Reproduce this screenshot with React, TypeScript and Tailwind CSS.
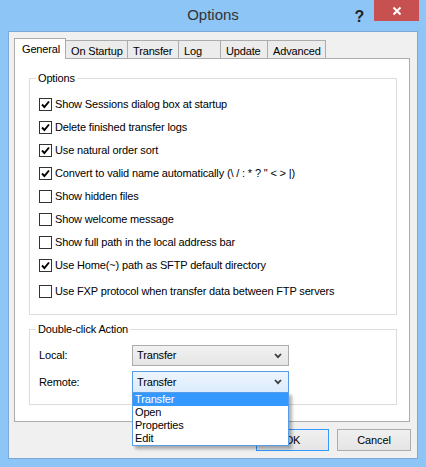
import { useState } from 'react'

const options = [
  { label: 'Show Sessions dialog box at startup', checked: true },
  { label: 'Delete finished transfer logs', checked: true },
  { label: 'Use natural order sort', checked: true },
  { label: 'Convert to valid name automatically (\\ / : * ? " < > |)', checked: true },
  { label: 'Show hidden files', checked: false },
  { label: 'Show welcome message', checked: false },
  { label: 'Show full path in the local address bar', checked: false },
  { label: 'Use Home(~) path as SFTP default directory', checked: true },
  { label: 'Use FXP protocol when transfer data between FTP servers', checked: false },
]

const tabs = [
  { name: 'General', w: 'w-[52px]' },
  { name: 'On Startup', w: 'w-[62px]' },
  { name: 'Transfer', w: 'w-[51px]' },
  { name: 'Log', w: 'w-[42px]' },
  { name: 'Update', w: 'w-[47px]' },
  { name: 'Advanced', w: 'w-[58px]' },
]

function Checkbox({ checked }: { checked: boolean }) {
  return (
    <div className="w-[13px] h-[13px] border border-[#333333] bg-white flex items-center justify-center shrink-0">
      {checked && (
        <svg width="9" height="9" viewBox="0 0 9 9">
          <path d="M1 4.5 L3.4 7 L8 1.5" fill="none" stroke="#000" strokeWidth="1.9" />
        </svg>
      )}
    </div>
  )
}

function Chevron() {
  return (
    <svg width="8" height="6" viewBox="0 0 8 6" className="shrink-0">
      <path d="M1 1 L4 4.2 L7 1" fill="none" stroke="#3c3c3c" strokeWidth="1.8" />
    </svg>
  )
}

export default function App() {
  const [checks, setChecks] = useState(options.map(o => o.checked))

  return (
    <div className="w-[426px] h-[467px] bg-[#8cc5f6] flex flex-col text-[11px] tracking-[-0.15px] text-black" style={{ fontFamily: '"Liberation Sans", Arial, sans-serif' }}>
      {/* title bar */}
      <div className="h-[31px] grid grid-cols-[1fr_auto_1fr]">
        <div />
        <div className="text-[15px] tracking-normal text-[#333] pt-[4px]">Options</div>
        <div className="flex justify-end items-start pr-[7px]">
          <div className="text-[16px] font-bold text-[#222] pt-[5px] mr-[10px]">?</div>
          <div className="w-[45px] h-[21px] bg-[#c75050] flex items-center justify-center">
            <svg width="10" height="10" viewBox="0 0 10 10">
              <path d="M1.5 1.5 L8.5 8.5 M8.5 1.5 L1.5 8.5" stroke="#fff" strokeWidth="2" />
            </svg>
          </div>
        </div>
      </div>

      {/* client */}
      <div className="mx-[8px] h-[428px] bg-[#f0f0f0] border border-[#7aa9d8] pl-[5px] pr-[6px] pt-[6px] flex flex-col">
        <div className="flex items-end h-[20px]">
          {tabs.map((t, i) =>
            i === 0 ? (
              <div key={t.name} className={`${t.w} h-[21px] -mb-px relative z-10 bg-white border border-b-0 border-[#acacac] pl-[7px] pt-[2px]`}>
                {t.name}
              </div>
            ) : (
              <div key={t.name} className={`${t.w} h-[18px] bg-[#ececec] border border-b-0 border-l-0 border-[#acacac] pl-[5px] pt-[2px]`}>
                {t.name}
              </div>
            )
          )}
        </div>

        <div className="w-[396px] h-[364px] bg-white border border-[#acacac] pl-[14px] pt-[12px]">
          <fieldset className="w-[368px] h-[244px] border border-[#dcdcdc]">
            <legend className="ml-[6px] px-[2px] leading-[14px]">Options</legend>
            <div className="pt-[8px] pl-[9px] flex flex-col">
              {options.map((o, i) => (
                <label key={o.label} className={`h-[23px] flex items-center gap-[3px] ${i === 8 ? 'mt-[3px]' : ''}`} onClick={() => setChecks(c => c.map((v, j) => (j === i ? !v : v)))}>
                  <Checkbox checked={checks[i]} />
                  <span>{o.label}</span>
                </label>
              ))}
            </div>
          </fieldset>

          <fieldset className="mt-[7px] w-[368px] h-[83px] border border-[#dcdcdc]">
            <legend className="ml-[6px] px-[2px] leading-[14px]">Double-click Action</legend>
            <div className="pt-[9px] pl-[9px] flex flex-col gap-[5px]">
              <div className="flex items-center h-[21px]">
                <div className="w-[93px]">Local:</div>
                <div className="w-[157px] h-[21px] border border-[#acacac] bg-gradient-to-b from-[#f2f2f2] to-[#e5e5e5] flex items-center justify-between pl-[4px] pr-[6px]">
                  <span>Transfer</span>
                  <Chevron />
                </div>
              </div>
              <div className="flex items-center h-[22px]">
                <div className="w-[93px]">Remote:</div>
                <div className="relative w-[157px] h-[22px] border border-[#569de5] bg-gradient-to-b from-[#ecf4fc] to-[#dcecfc] flex items-center justify-between pl-[4px] pr-[6px]">
                  <span>Transfer</span>
                  <Chevron />
                  <div className="absolute left-[-1px] top-[20px] w-[157px] h-[54px] bg-white border border-[#569de5] shadow-[3px_3px_3px_rgba(0,0,0,0.3)] z-20 flex flex-col">
                    <div className="h-[13px] leading-[13px] bg-[#3399ff] text-white pl-[2px]">Transfer</div>
                    <div className="h-[13px] leading-[13px] pl-[2px]">Open</div>
                    <div className="h-[13px] leading-[13px] pl-[2px]">Properties</div>
                    <div className="h-[13px] leading-[13px] pl-[2px]">Edit</div>
                  </div>
                </div>
              </div>
            </div>
          </fieldset>
        </div>

        <div className="mt-[7px] flex justify-end gap-[8px]">
          <button className="w-[73px] h-[22px] border border-[#3399ff] bg-gradient-to-b from-[#f0f0f0] to-[#e5e5e5]">OK</button>
          <button className="w-[74px] h-[22px] border border-[#acacac] bg-gradient-to-b from-[#f0f0f0] to-[#e5e5e5]">Cancel</button>
        </div>
      </div>
    </div>
  )
}
